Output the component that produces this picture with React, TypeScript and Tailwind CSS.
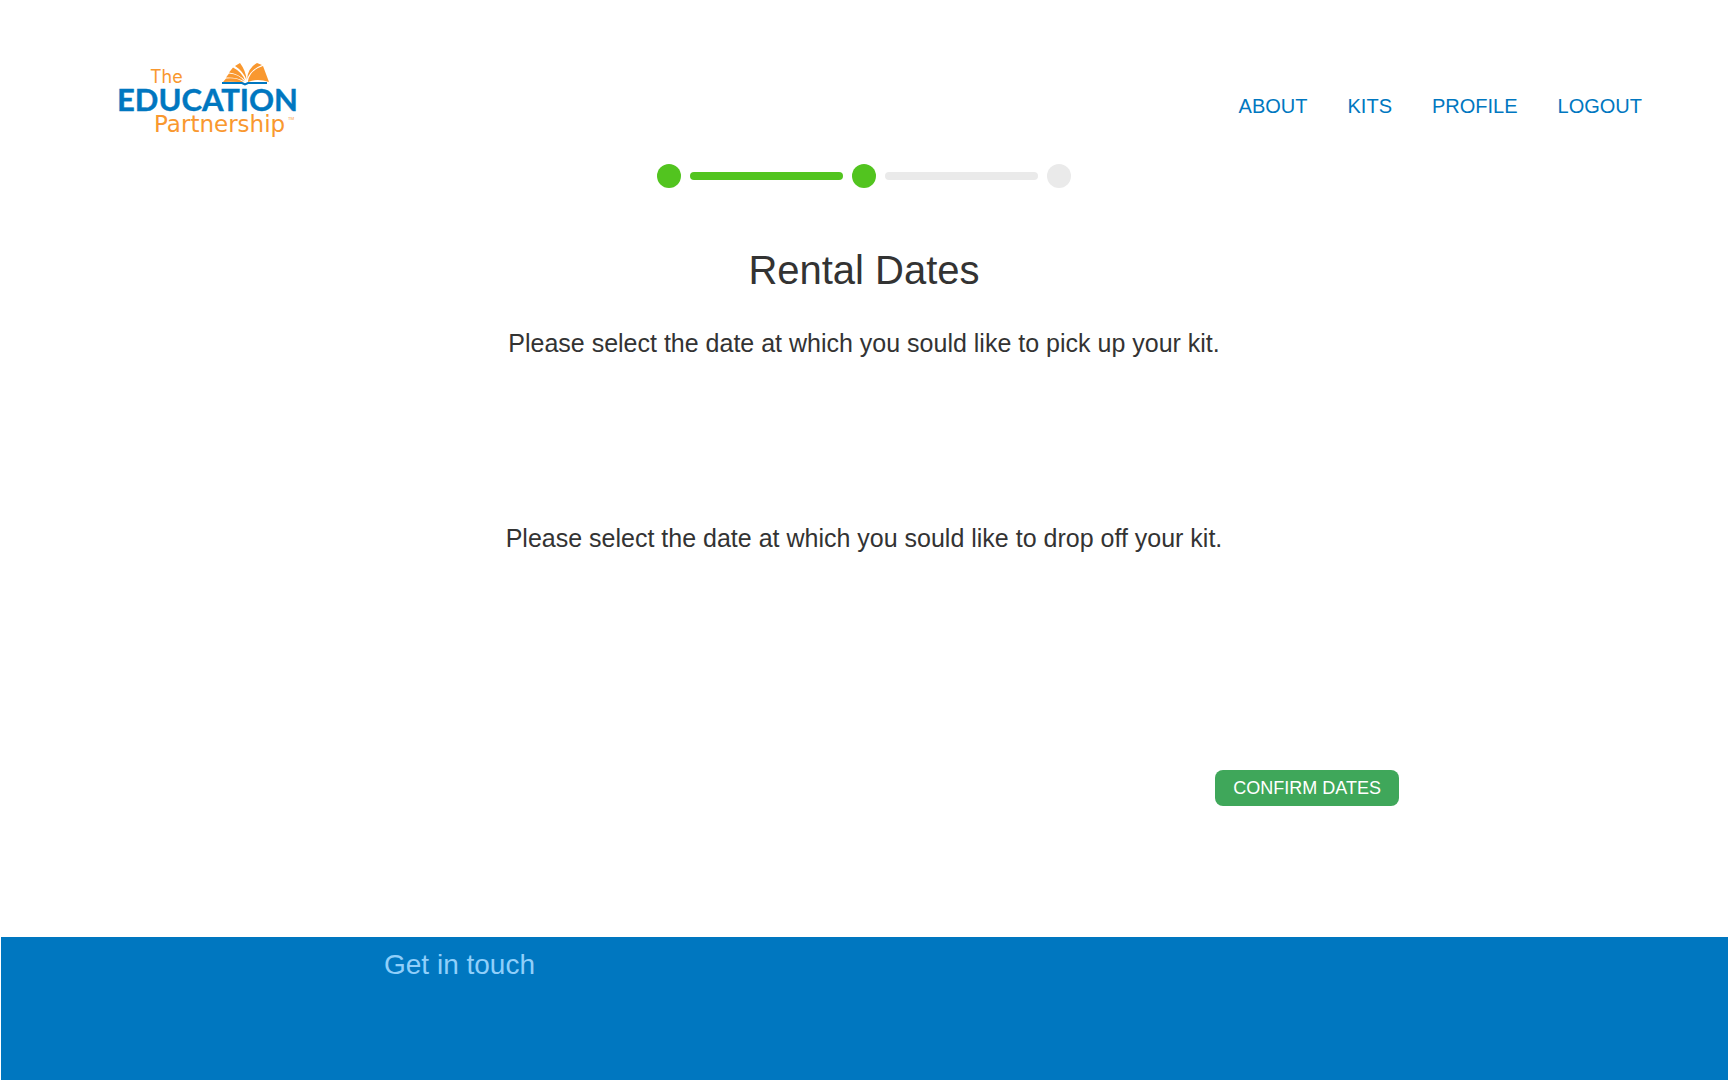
const navItems = ["About", "Kits", "Profile", "Logout"];

function Logo() {
  return (
    <svg width="180" height="80" viewBox="117 60 180 80" role="img" aria-label="The Education Partnership">
      <g fill="#f9982f">
        <path d="M223 82 L226 78.500 Q237 77 244 82.500 Q235 81.500 223 82 Z" />
        <path d="M226 77.500 L229 73.500 Q239 74 244.500 81.500 Q237 77 226 77.500 Z" />
        <path d="M229 72.500 L233 67.500 Q242 72 245 80.500 Q239 74 229 72.500 Z" />
        <path d="M235 66 L240 63 Q246 71 246.500 80 Q243 71 235 66 Z" />
        <path d="M247 79 Q248 68 257 63 L262 65 Q251 69 247 79 Z" />
        <path d="M248 81 Q250 70 263 66 L269 82 Q257 78 248 82 Z" />
      </g>
      <path d="M222 83 H242 L245 84.500 L248 83 H267" fill="none" stroke="#0077c0" strokeWidth="2" />
      <text x="150" y="83" fontSize="18" fill="#f9982f" fontFamily="Inter, sans-serif">The</text>
      <text
        x="117"
        y="111"
        fontSize="31"
        fontWeight="700"
        fill="#0077c0"
        stroke="#0077c0"
        strokeWidth="0.4"
        fontFamily="Lato, sans-serif"
      >
        EDUCATION
      </text>
      <text x="154" y="132" fontSize="23" fill="#f9982f" fontFamily="DejaVu Sans, sans-serif">Partnership</text>
      <text x="288" y="120" fontSize="4" fill="#f9982f" fontFamily="Inter, sans-serif">TM</text>
    </svg>
  );
}

function Dot({ done }: { done: boolean }) {
  return <li className={`size-6 shrink-0 rounded-full ${done ? "bg-[#52c41f]" : "bg-[#eaeaea]"}`} />;
}

function Bar({ done }: { done: boolean }) {
  return (
    <li aria-hidden="true" className={`h-2 w-[153px] rounded-full ${done ? "bg-[#52c41f]" : "bg-[#eaeaea]"}`} />
  );
}

export default function App() {
  return (
    <div className="flex min-h-screen flex-col bg-white font-['Liberation_Sans',Arial,sans-serif] text-[#333333]">
      <header className="flex items-center justify-between pt-[60px] pr-[86px] pl-[117px]">
        <a href="#home">
          <Logo />
        </a>
        <nav className="flex gap-10 pt-3 text-xl leading-6 text-[#0077c0] uppercase">
          {navItems.map((item) => (
            <a key={item} href={`#${item.toLowerCase()}`}>
              {item}
            </a>
          ))}
        </nav>
      </header>
      <main className="flex flex-col items-center pt-6 pb-[131px]">
        <ol aria-label="Progress" className="flex items-center gap-[9px]">
          <Dot done />
          <Bar done />
          <Dot done />
          <Bar done={false} />
          <Dot done={false} />
        </ol>
        <h1 className="mt-[58px] text-[40px] leading-[48px]">Rental Dates</h1>
        <p className="mt-[33px] text-[25px] leading-8">
          Please select the date at which you sould like to pick up your kit.
        </p>
        <p className="mt-[163px] text-[25px] leading-8">
          Please select the date at which you sould like to drop off your kit.
        </p>
        <div className="mt-[216px] flex w-full justify-end pr-[329px]">
          <button type="button" className="rounded-lg bg-[#3fa75a] px-[18px] py-1.5 text-lg leading-6 text-white uppercase">
            Confirm dates
          </button>
        </div>
      </main>
      <footer className="ml-px grow bg-[#0077c0] pt-3 pl-[383px]">
        <h2 className="text-[28px] leading-8 text-[#90cffa]">Get in touch</h2>
      </footer>
    </div>
  );
}
